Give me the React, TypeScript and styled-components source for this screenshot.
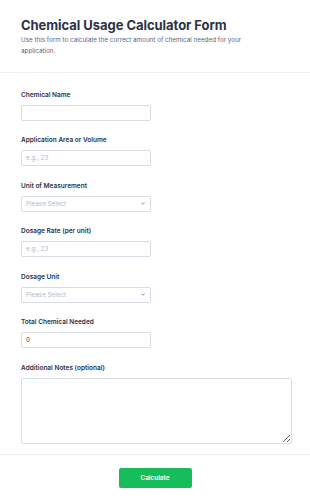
import styled, { createGlobalStyle } from "styled-components";

const GlobalStyle = createGlobalStyle`
  html, body {
    margin: 0;
    padding: 0;
    background: #ffffff;
  }
  body {
    font-family: Inter, "Noto Sans", sans-serif;
    color: #2c3345;
  }
  * {
    box-sizing: border-box;
  }
`;

const Page = styled.div`
  width: 310px;
  min-height: 503px;
  display: flex;
  flex-direction: column;
`;

const Header = styled.header`
  padding: 17px 21px 0;
  height: 73px;
  border-bottom: 1px solid #eceef2;
`;

const Title = styled.h1`
  margin: 0;
  font-size: 13px;
  line-height: 16px;
  font-weight: 700;
  letter-spacing: -0.05px;
  color: #2c3345;
`;

const Subtitle = styled.p`
  margin: 2px 0 0;
  width: 250px;
  font-size: 6.3px;
  line-height: 10.5px;
  color: #57647e;
`;

const Form = styled.form`
  display: flex;
  flex-direction: column;
  gap: 14.5px;
  padding: 16.7px 18px 10px 21px;
  border-bottom: 1px solid #eceef2;
`;

const Field = styled.div`
  display: flex;
  flex-direction: column;
  gap: 5px;
`;

const Label = styled.label`
  font-size: 6.5px;
  line-height: 10px;
  font-weight: 600;
  color: #2c3345;
`;

const TextInput = styled.input`
  display: block;
  width: 130px;
  height: 16px;
  padding: 0 4px;
  border: 1px solid #d8dce4;
  border-radius: 2px;
  font-family: inherit;
  font-size: 6.3px;
  color: #2c3345;
  background: #fff;
  outline: none;

  &::placeholder {
    color: #b4bac6;
  }
`;

const SelectWrap = styled.div`
  position: relative;
  width: 130px;
  height: 16px;
  line-height: 0;
`;

const Select = styled.select`
  display: block;
  appearance: none;
  width: 100%;
  height: 100%;
  margin: 0;
  padding: 0 4px;
  border: 1px solid #d8dce4;
  border-radius: 2px;
  font-family: inherit;
  font-size: 6.3px;
  line-height: normal;
  color: #b4bac6;
  background: #fff;
  outline: none;
`;

const Chevron = styled.svg`
  position: absolute;
  right: 6px;
  top: 6.5px;
  width: 4px;
  height: 3px;
  pointer-events: none;
`;

const Notes = styled.textarea`
  display: block;
  width: 271px;
  height: 66px;
  border: 1px solid #d8dce4;
  border-radius: 2px;
  font-family: inherit;
  font-size: 6.3px;
  padding: 4px;
  outline: none;
`;

const Footer = styled.div`
  display: flex;
  justify-content: center;
  padding: 13px 0 16px;
`;

const Button = styled.button`
  width: 73px;
  height: 20px;
  border: none;
  border-radius: 2px;
  background: #18bd5b;
  color: #ffffff;
  font-family: inherit;
  font-size: 6.4px;
  font-weight: 600;
  cursor: pointer;
`;

const UnitSelect = ({ id }: { id: string }) => (
  <SelectWrap>
    <Select id={id} defaultValue="">
      <option value="">Please Select</option>
    </Select>
    <Chevron viewBox="0 0 8 6">
      <path d="M1 1.5 L4 4.5 L7 1.5" fill="none" stroke="#57647e" strokeWidth="1.4" strokeLinecap="round" />
    </Chevron>
  </SelectWrap>
);

export default function App() {
  return (
    <Page>
      <GlobalStyle />
      <Header>
        <Title>Chemical Usage Calculator Form</Title>
        <Subtitle>
          Use this form to calculate the correct amount of chemical needed for your
          application.
        </Subtitle>
      </Header>
      <Form onSubmit={(e) => e.preventDefault()}>
        <Field>
          <Label htmlFor="name">Chemical Name</Label>
          <TextInput id="name" type="text" />
        </Field>
        <Field>
          <Label htmlFor="area">Application Area or Volume</Label>
          <TextInput id="area" type="text" placeholder="e.g., 23" />
        </Field>
        <Field>
          <Label htmlFor="unit">Unit of Measurement</Label>
          <UnitSelect id="unit" />
        </Field>
        <Field>
          <Label htmlFor="rate">Dosage Rate (per unit)</Label>
          <TextInput id="rate" type="text" placeholder="e.g., 23" />
        </Field>
        <Field>
          <Label htmlFor="dunit">Dosage Unit</Label>
          <UnitSelect id="dunit" />
        </Field>
        <Field>
          <Label htmlFor="total">Total Chemical Needed</Label>
          <TextInput id="total" type="text" defaultValue="0" />
        </Field>
        <Field>
          <Label htmlFor="notes">Additional Notes (optional)</Label>
          <Notes id="notes" />
        </Field>
      </Form>
      <Footer>
        <Button type="button">Calculate</Button>
      </Footer>
    </Page>
  );
}
